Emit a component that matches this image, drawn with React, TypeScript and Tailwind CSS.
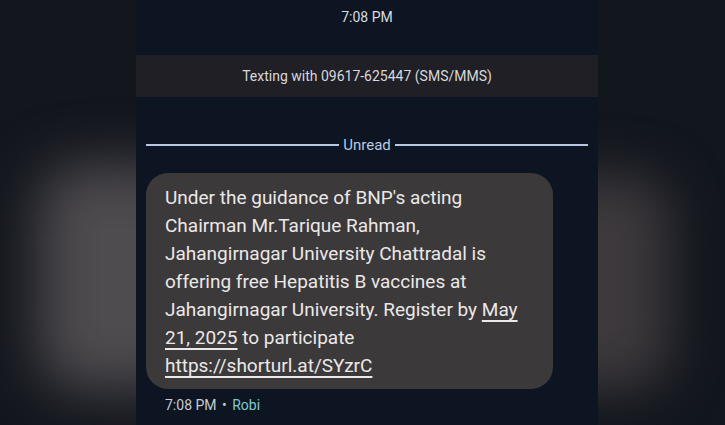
const font = { fontFamily: "Roboto, 'Noto Sans', sans-serif" };

function SidePanel({ side }: { side: "left" | "right" }) {
  return (
    <div
      className={
        side === "left"
          ? "w-[136px] h-full overflow-hidden bg-[#13161d] flex flex-col pt-[165px]"
          : "w-[127px] h-full overflow-hidden bg-[#12161d] flex flex-col pt-[175px]"
      }
    >
      <div
        className={
          side === "left"
            ? "h-[225px] ml-[38px] -mr-[60px] rounded-[40px] bg-[#4f4c4f] blur-[28px]"
            : "h-[215px] -ml-[70px] mr-[55px] rounded-[40px] bg-[#3d393c] blur-[26px]"
        }
      />
    </div>
  );
}

export default function App() {
  return (
    <div className="w-[725px] h-[425px] flex overflow-hidden bg-[#12161d]" style={font}>
      <SidePanel side="left" />

      <main className="w-[462px] h-full bg-[#0c1521] flex flex-col">
        <div className="h-[34px] flex items-center justify-center text-[14px] text-[#d9dbe0]">
          7:08 PM
        </div>
        <div className="mt-[21px] h-[42px] bg-[#201f25] flex items-center justify-center text-[14px] text-[#d7d8dc]">
          Texting with 09617-625447 (SMS/MMS)
        </div>

        <div className="mt-[39px] mx-[10px] flex items-center gap-[4px] text-[15px] leading-[18px] text-[#b9c8e2]">
          <div className="flex-1 h-[1.5px] bg-[#b9c8e2]" />
          <span>Unread</span>
          <div className="flex-1 h-[1.5px] bg-[#b9c8e2]" />
        </div>

        <div className="mt-[19px] ml-[10px] w-[407px] rounded-[22px] bg-[#3c393b] pl-[19px] pr-[14px] pt-[11px] pb-[9px] text-[19px] leading-[28px] text-[#ebe8e8]">
          Under the guidance of BNP's acting Chairman Mr.Tarique Rahman, Jahangirnagar University
          Chattradal is offering free Hepatitis B vaccines at Jahangirnagar University. Register by{" "}
          <span className="underline underline-offset-[4px] decoration-[1.5px]">May 21, 2025</span> to
          participate{" "}
          <span className="underline underline-offset-[4px] decoration-[1.5px]">https://shorturl.at/SYzrC</span>
        </div>

        <div className="mt-[6px] ml-[29px] text-[14px] text-[#c9ccd2]">
          7:08 PM <span className="mx-[2px]">•</span> <span className="text-[#7fc9d2]">Robi</span>
        </div>
      </main>

      <SidePanel side="right" />
    </div>
  );
}
